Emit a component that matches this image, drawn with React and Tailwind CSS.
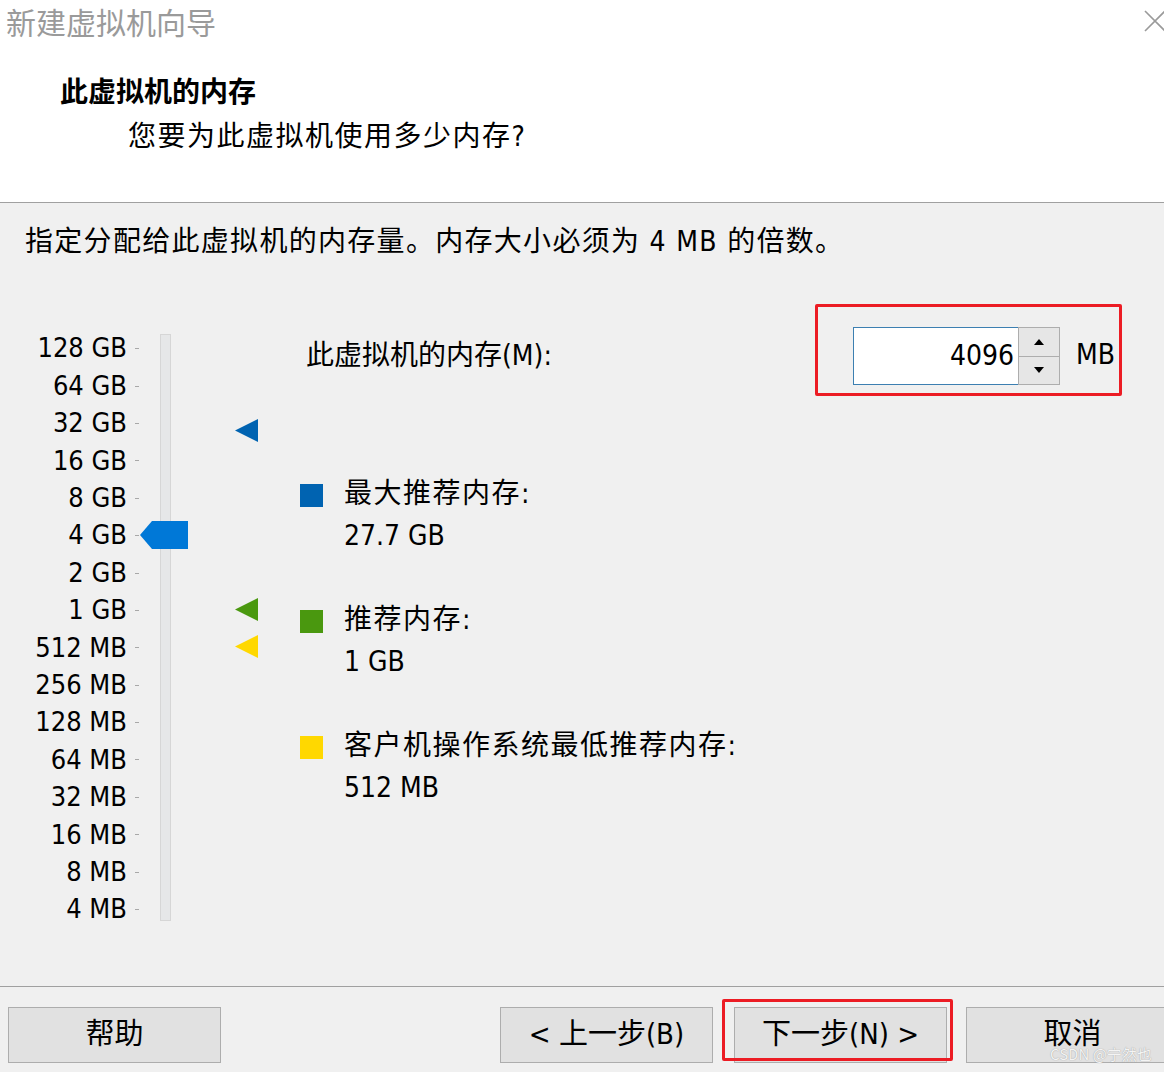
const labels = [
  '128 GB', '64 GB', '32 GB', '16 GB', '8 GB', '4 GB', '2 GB', '1 GB',
  '512 MB', '256 MB', '128 MB', '64 MB', '32 MB', '16 MB', '8 MB', '4 MB',
]

const legend = [
  { color: 'bg-[#0063b1]', title: '最大推荐内存:', value: '27.7 GB' },
  { color: 'bg-[#4a980f]', title: '推荐内存:', value: '1 GB' },
  { color: 'bg-[#ffd800]', title: '客户机操作系统最低推荐内存:', value: '512 MB' },
]

function Marker({ color, top }) {
  return (
    <svg className="absolute left-[235px]" style={{ top }} width="24" height="24" viewBox="0 0 24 24">
      <polygon points="0,11.5 23,0 23,23" fill={color} />
    </svg>
  )
}

function WinButton({ children, className = '' }) {
  return (
    <div className={`w-[213px] h-[56px] shrink-0 bg-[#e1e1e1] border border-[#adadad] flex items-center justify-center text-[29px] text-black ${className}`}>
      {children}
    </div>
  )
}

export default function App() {
  return (
    <div className="w-[1164px] h-[1072px] bg-[#f0f0f0] flex flex-col overflow-hidden relative font-['DejaVu_Sans_Condensed','DejaVu_Sans','Noto_Sans_CJK_SC',sans-serif] text-black">
      {/* header */}
      <div className="h-[203px] shrink-0 bg-white border-b border-[#a0a0a0] relative">
        <div className="flex justify-between">
          <div className="pl-[6px] text-[30px] leading-[42px] text-[#9a9a9a] font-['Noto_Sans_CJK_SC',sans-serif]">新建虚拟机向导</div>
          <svg className="mt-[10px] mr-[-2px]" width="22" height="22" viewBox="0 0 22 22">
            <path d="M1 1 L21 21 M21 1 L1 21" stroke="#9a9a9a" strokeWidth="1.6" />
          </svg>
        </div>
        <div className="mt-[30px] pl-[60px] text-[28px] leading-[42px] font-bold">此虚拟机的内存</div>
        <div className="mt-[2px] pl-[128px] text-[28px] leading-[42px] tracking-[1.5px]">您要为此虚拟机使用多少内存?</div>
      </div>

      {/* body */}
      <div className="flex-1">
        <div className="pt-[18px] pl-[25px] text-[28px] leading-[42px] tracking-[1.3px]">
          指定分配给此虚拟机的内存量。内存大小必须为 4 MB 的倍数。
        </div>

        <div className="mt-[41px] flex">
          {/* slider */}
          <div className="w-[300px] shrink-0 relative flex">
            <div className="pt-[26px] w-[139px]">
              {labels.map(l => (
                <div key={l} className="h-[37.4px] flex items-center justify-end text-[27px]">
                  <span>{l}</span>
                  <span className="ml-[8px] w-[4px] h-px bg-[#a8a8a8]" />
                </div>
              ))}
            </div>
            <div className="ml-[21px] mt-[30px] w-[11px] h-[587px] bg-[#e6e7e8] border border-[#d6d6d6]" />
            <svg className="absolute left-[140px] top-[217px]" width="48" height="28" viewBox="0 0 48 28">
              <polygon points="0,14 12,0 48,0 48,28 12,28" fill="#0078d7" />
            </svg>
            <Marker color="#0063b1" top={115} />
            <Marker color="#4a980f" top={294} />
            <Marker color="#ffd800" top={331} />
          </div>

          {/* right side */}
          <div className="flex-1">
            <div className="h-[92px] flex items-center justify-between mr-[42px]">
              <div className="pl-[6px] text-[28px] mt-[12px]">此虚拟机的内存(M):</div>
              <div className="w-[307px] h-[92px] border-[3px] border-[#ec1c24] rounded-[2px] flex items-start pl-[35px] pt-[20px]">
                <div className="w-[165px] h-[58px] bg-white border border-r-0 border-[#3c7fb1] flex items-center justify-end pr-[4px] text-[28px]">
                  4096
                </div>
                <div className="w-[42px] h-[58px] flex flex-col">
                  <div className="flex-1 bg-[#e6e6e6] border border-[#adadad] flex items-center justify-center">
                    <svg width="10" height="6" viewBox="0 0 10 6"><polygon points="5,0 10,6 0,6" fill="#000" /></svg>
                  </div>
                  <div className="flex-1 bg-[#e6e6e6] border border-t-0 border-[#adadad] flex items-center justify-center">
                    <svg width="10" height="6" viewBox="0 0 10 6"><polygon points="0,0 10,0 5,6" fill="#000" /></svg>
                  </div>
                </div>
                <div className="ml-[16px] mt-[8px] text-[28px] leading-[40px]">MB</div>
              </div>
            </div>

            <div className="mt-[77px] flex flex-col gap-[42px]">
              {legend.map(g => (
                <div key={g.title} className="flex items-start">
                  <div className={`mt-[11px] w-[23px] h-[23px] ${g.color}`} />
                  <div className="ml-[21px] text-[28px] leading-[42px]">
                    <div className="tracking-[1.5px]">{g.title}</div>
                    <div>{g.value}</div>
                  </div>
                </div>
              ))}
            </div>
          </div>
        </div>
      </div>

      {/* footer */}
      <div className="h-[86px] shrink-0 border-t border-[#a0a0a0] pt-[20px] pl-[8px] flex items-start">
        <WinButton>帮助</WinButton>
        <WinButton className="ml-[279px]">&lt; 上一步(B)</WinButton>
        <div className="relative ml-[21px] shrink-0 h-[56px]">
          <WinButton>下一步(N) &gt;</WinButton>
          <div className="absolute left-[-12px] right-[-6px] top-[-8px] bottom-[2px] border-[3px] border-[#ec1c24] rounded-[2px]" />
        </div>
        <WinButton className="ml-[19px]">取消</WinButton>
      </div>

      <div className="absolute left-[1050px] top-[1043px] text-[15px] text-[#f4f4f4] [text-shadow:0_0_1px_#8a8a8a] font-['Noto_Sans_CJK_SC',sans-serif]">
        CSDN @宁然也
      </div>
    </div>
  )
}
